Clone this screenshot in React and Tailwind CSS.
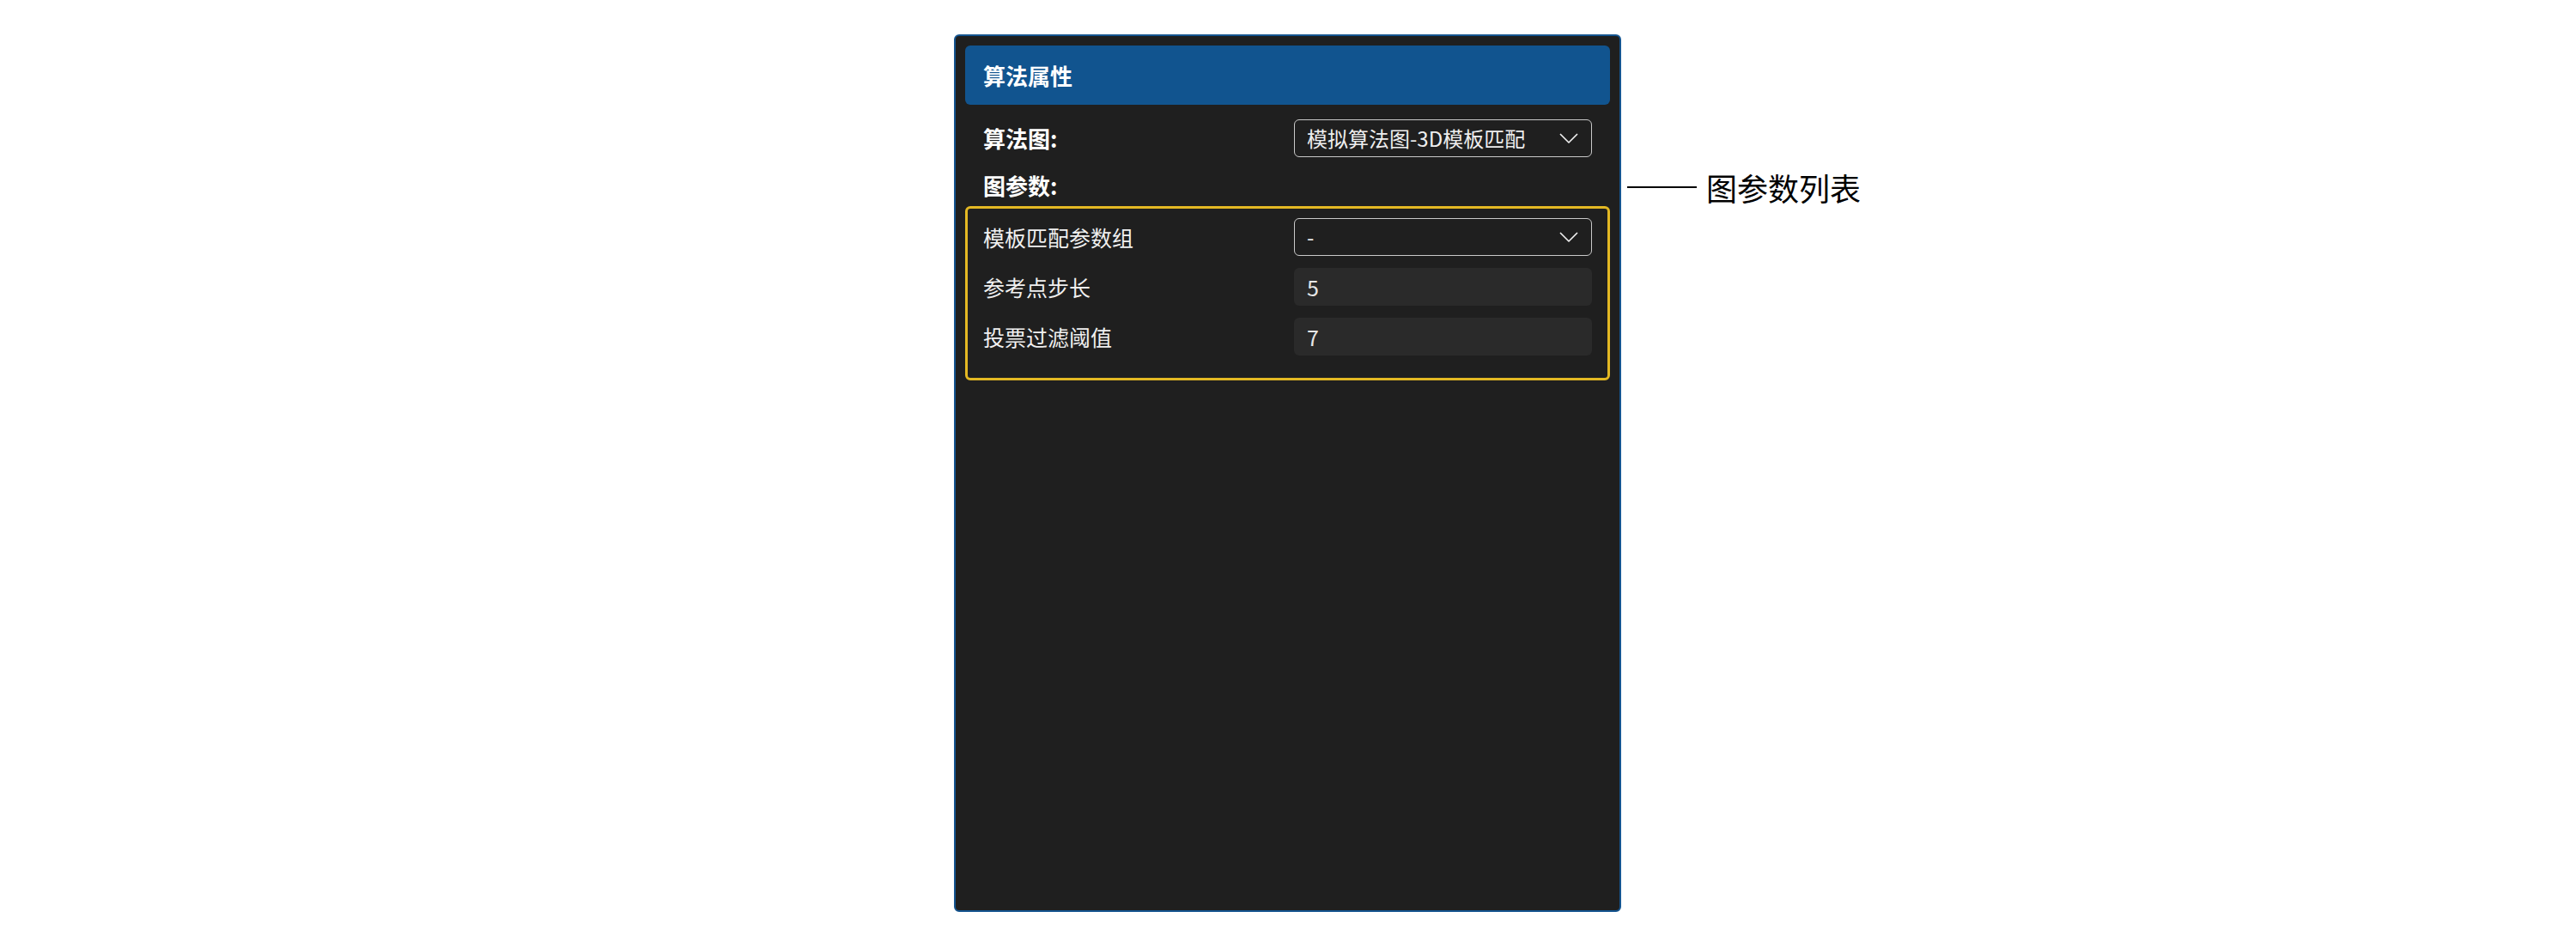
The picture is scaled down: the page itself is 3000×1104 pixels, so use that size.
import React from 'react';

const FONT = '"Noto Sans CJK SC", "Noto Sans", sans-serif';

// chevron used by both selects
const Chevron = () => (
  <svg width="22" height="12" viewBox="0 0 22 12" fill="none">
    <polyline points="1,1 11,11 21,1" stroke="#f2f2f2" strokeWidth="1.6" strokeLinejoin="round" />
  </svg>
);

const Select = ({ value }) => (
  <div className="w-[347px] h-[44px] border border-[#c9c9c9] rounded-[6px] bg-[#1f1f1f] flex items-center justify-between pl-[14px] pr-[15px]">
    <span className="text-[24px] leading-none text-[#eeeeee]">{value}</span>
    <Chevron />
  </div>
);

const Field = ({ value }) => (
  <div className="w-[347px] h-[44px] rounded-[6px] bg-[#2a2a2a] flex items-center pl-[15px]">
    <span className="text-[25px] leading-none text-[#e6e6e6]">{value}</span>
  </div>
);

const params = [
  { label: '模板匹配参数组', type: 'select', value: '-' },
  { label: '参考点步长', type: 'input', value: '5' },
  { label: '投票过滤阈值', type: 'input', value: '7' },
];

export default function App() {
  return (
    <div className="w-[3000px] h-[1104px] bg-white flex pl-[1111px] pt-[40px]" style={{ fontFamily: FONT }}>
      {/* Panel */}
      <div className="w-[777px] h-[1022px] border-2 border-[#14548f] rounded-[6px] bg-[#1f1f1f] p-[11px] flex flex-col">
        {/* Header */}
        <div className="h-[69px] rounded-[6px] bg-[#11548f] flex items-center pl-[21px]">
          <span className="text-[26px] font-bold text-white leading-none">算法属性</span>
        </div>

        {/* Graph selector */}
        <div className="mt-[17px] h-[44px] flex items-center justify-between px-[21px]">
          <span className="text-[26px] font-bold text-white leading-none">算法图:</span>
          <Select value="模拟算法图-3D模板匹配" />
        </div>

        <div className="mt-[17px] h-[32px] flex items-center px-[21px]">
          <span className="text-[26px] font-bold text-white leading-none">图参数:</span>
        </div>

        {/* Param list */}
        <div className="mt-[8px] border-[3px] border-[#e3b823] rounded-[6px] pt-[11px] pb-[26px] px-[18px] flex flex-col gap-[14px]">
          {params.map((p) => (
            <div key={p.label} className="h-[44px] flex items-center justify-between">
              <span className="text-[25px] text-[#f0f0f0] leading-none">{p.label}</span>
              {p.type === 'select' ? <Select value={p.value} /> : <Field value={p.value} />}
            </div>
          ))}
        </div>
      </div>

      {/* Annotation */}
      <div className="ml-[7px] mt-[158px] h-[40px] flex items-center self-start">
        <div className="w-[81px] h-[2px] bg-black" />
        <span className="ml-[11px] text-[36px] text-black leading-none">图参数列表</span>
      </div>
    </div>
  );
}
